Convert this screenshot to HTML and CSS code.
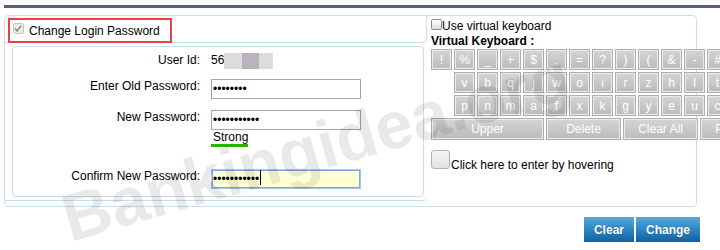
FILE: index.html
```html
<!DOCTYPE html>
<html>
<head>
<meta charset="utf-8">
<link rel="stylesheet" href="styles.css">
</head>
<body>
<div class="topbar"></div>
<div class="frame">
  <div class="pane-left">
    <div class="head">
      <div class="hl">
        <span class="cb-check"><svg width="11" height="11" viewBox="0 0 11 11"><path d="M2.3 5.6 L4.5 8.2 L8.8 2.4" fill="none" stroke="#8d8d8d" stroke-width="1.7"/></svg></span>
        <span class="hl-text">Change Login Password</span>
      </div>
    </div>
    <div class="fs-outer">
      <div class="fs">
        <div class="row r1">
          <div class="lbl">User Id:</div>
          <div class="val">56<span class="mask m1"></span><span class="mask m2"></span><span class="mask m3"></span></div>
        </div>
        <div class="row r2">
          <div class="lbl">Enter Old Password:</div>
          <div class="inp">••••••••</div>
        </div>
        <div class="row r3">
          <div class="lbl">New Password:</div>
          <div class="col">
            <div class="inp">•••••••••••</div>
            <span class="strength">Strong</span>
          </div>
        </div>
        <div class="row r4">
          <div class="lbl">Confirm New Password:</div>
          <div class="inp focus">•••••••••••<span class="caret"></span></div>
        </div>
      </div>
    </div>
  </div>
  <div class="pane-right">
    <div class="vk-toggle"><span class="cb-sm"></span><span>Use virtual keyboard</span></div>
    <div class="vk-title">Virtual Keyboard :</div>
    <div class="keys">
      <span class="key">!</span><span class="key">%</span><span class="key">_</span><span class="key">+</span><span class="key">$</span><span class="key">.</span><span class="key">=</span><span class="key">?</span><span class="key">)</span><span class="key">(</span><span class="key">&amp;</span><span class="key">-</span><span class="key">#</span>
      <span class="key skip">v</span><span class="key">b</span><span class="key">q</span><span class="key">j</span><span class="key">w</span><span class="key">o</span><span class="key">i</span><span class="key">r</span><span class="key">z</span><span class="key">h</span><span class="key">l</span><span class="key">t</span>
      <span class="key skip">p</span><span class="key">n</span><span class="key">m</span><span class="key">a</span><span class="key">f</span><span class="key">x</span><span class="key">k</span><span class="key">g</span><span class="key">y</span><span class="key">e</span><span class="key">u</span><span class="key">c</span>
    </div>
    <div class="keys-wide">
      <span class="key w-upper">Upper</span><span class="key w-mid">Delete</span><span class="key w-mid">Clear All</span><span class="key w-mid">Proceed</span>
    </div>
    <div class="hover"><span class="cb-big"></span>Click here to enter by hovering</div>
  </div>
</div>
<div class="actions">
  <button class="btn">Clear</button><button class="btn">Change</button>
</div>
<div class="watermark">Bankingidea.org</div>
</body>
</html>
```
FILE: styles.css
```css
html, body {
  margin: 0;
  overflow: hidden;
}
body {
  position: relative;
  width: 720px;
  height: 250px;
  background: #fff;
  color: #000;
  font: 12px/14px "Liberation Sans", Arial, sans-serif;
}
.topbar {
  height: 3px;
  margin: 5px 0 0 4px;
  background: #56607a;
}
.frame {
  margin: 7px 0 0 4px;
  width: 693px;
  height: 192px;
  box-sizing: border-box;
  border: 1px solid #c7e0ea;
  border-radius: 4px;
  display: flex;
}
.pane-left {
  width: 422px;
  flex: none;
}
.head {
  height: 27px;
  box-sizing: border-box;
  border-right: 1px solid #c7e0ea;
  border-bottom: 1px solid #c7e0ea;
  border-bottom-right-radius: 4px;
  display: flex;
  align-items: flex-start;
}
.hl {
  margin: 2px 0 0 3px;
  width: 164px;
  height: 25px;
  box-sizing: border-box;
  border: 2px solid #ef3e46;
  padding: 3px 0 0 3px;
  display: flex;
  align-items: flex-start;
  position: relative;
}
.cb-check {
  width: 11px;
  height: 11px;
  box-sizing: border-box;
  border: 1px solid #c4c4c4;
  border-radius: 2px;
  background: #ececec;
  flex: none;
  display: flex;
}
.cb-check svg {
  margin: -1px 0 0 -1px;
}
.hl-text {
  margin: 1px 0 0 5px;
  white-space: nowrap;
}
.fs-outer {
  padding: 3px 3px 3px 7px;
  border-bottom: 1px solid #c7e0ea;
  border-bottom-right-radius: 4px;
}
.fs {
  height: 151px;
  box-sizing: border-box;
  border: 1px solid #c7e0ea;
  border-radius: 4px;
  padding-top: 6px;
}
.row {
  display: flex;
  align-items: flex-start;
}
.lbl {
  width: 187px;
  margin-right: 11px;
  text-align: right;
  flex: none;
}
.r2 { margin-top: 10px; }
.r3 { margin-top: 11px; }
.r4 { margin-top: 22px; }
.val {
  display: flex;
  align-items: flex-start;
}
.mask {
  display: inline-block;
  height: 16px;
}
.m1 { width: 18px; background: #dcdcdc; }
.m2 { width: 17px; background: #bab3bd; }
.m3 { width: 14px; background: #dcdcdc; }
.col {
  display: flex;
  flex-direction: column;
  align-items: flex-start;
}
.inp {
  width: 150px;
  height: 20px;
  box-sizing: border-box;
  border: 1px solid #a5a5a5;
  padding-left: 1px;
  line-height: 18px;
  white-space: nowrap;
  overflow: hidden;
  background: #fff;
}
.focus {
  background: #ffffd6;
  border-color: #a8c3ec;
  box-shadow: inset 0 0 0 1px #7fa4e0;
}
.caret {
  display: inline-block;
  width: 1px;
  height: 15px;
  background: #000;
  vertical-align: -2px;
  margin-left: 1px;
}
.strength {
  display: inline-block;
  padding-left: 2px;
  border-bottom: 3px solid #27b300;
}
.pane-right {
  flex: none;
  width: 269px;
  box-sizing: border-box;
  padding: 3px 0 0 4px;
}
.vk-toggle {
  height: 15px;
  display: flex;
  align-items: flex-start;
  white-space: nowrap;
}
.cb-sm {
  width: 11px;
  height: 11px;
  box-sizing: border-box;
  border: 1px solid #8e8e8e;
  border-radius: 2px;
  background: linear-gradient(#ffffff, #dcdcdc);
  flex: none;
}
.vk-title {
  font-weight: bold;
  margin-bottom: 1px;
  white-space: nowrap;
}
.keys {
  display: grid;
  grid-template-columns: repeat(13, 21px);
  grid-auto-rows: 21px;
  gap: 2px;
}
.key {
  box-sizing: border-box;
  border: 1px solid #adadad;
  box-shadow: inset 0 0 0 1px #ebebeb;
  background: linear-gradient(#d5d5d5, #bbbbbb);
  color: #fff;
  display: flex;
  align-items: center;
  justify-content: center;
  white-space: nowrap;
  overflow: hidden;
}
.skip { grid-column-start: 2; }
.keys-wide {
  display: flex;
  gap: 2px;
  margin-top: 2px;
  height: 22px;
}
.w-upper { width: 113px; flex: none; }
.w-mid { width: 75px; flex: none; }
.hover {
  margin-top: 10px;
  white-space: nowrap;
}
.cb-big {
  display: inline-block;
  width: 19px;
  height: 19px;
  box-sizing: border-box;
  border: 1px solid #b3b3b3;
  border-radius: 3px;
  background: linear-gradient(#f5f5f5, #e1e1e1);
  vertical-align: baseline;
  margin-right: 1px;
}
.actions {
  display: flex;
  justify-content: flex-end;
  gap: 2px;
  margin-top: 10px;
  padding-right: 20px;
}
.btn {
  height: 25px;
  padding: 0 10px;
  border: 0;
  margin: 0;
  font: bold 12px "Liberation Sans", Arial, sans-serif;
  color: #fff;
  background: linear-gradient(#5ba9d9, #2f86c2 50%, #0c62a3);
  text-shadow: 0 0 1px rgba(0, 40, 80, 0.5);
}
.watermark {
  position: absolute;
  left: 316px;
  top: 147px;
  transform: translate(-50%, -50%) rotate(-16deg);
  font: bold 67px "Liberation Sans", Arial, sans-serif;
  color: rgba(0, 0, 0, 0.085);
  white-space: nowrap;
  pointer-events: none;
}
```
